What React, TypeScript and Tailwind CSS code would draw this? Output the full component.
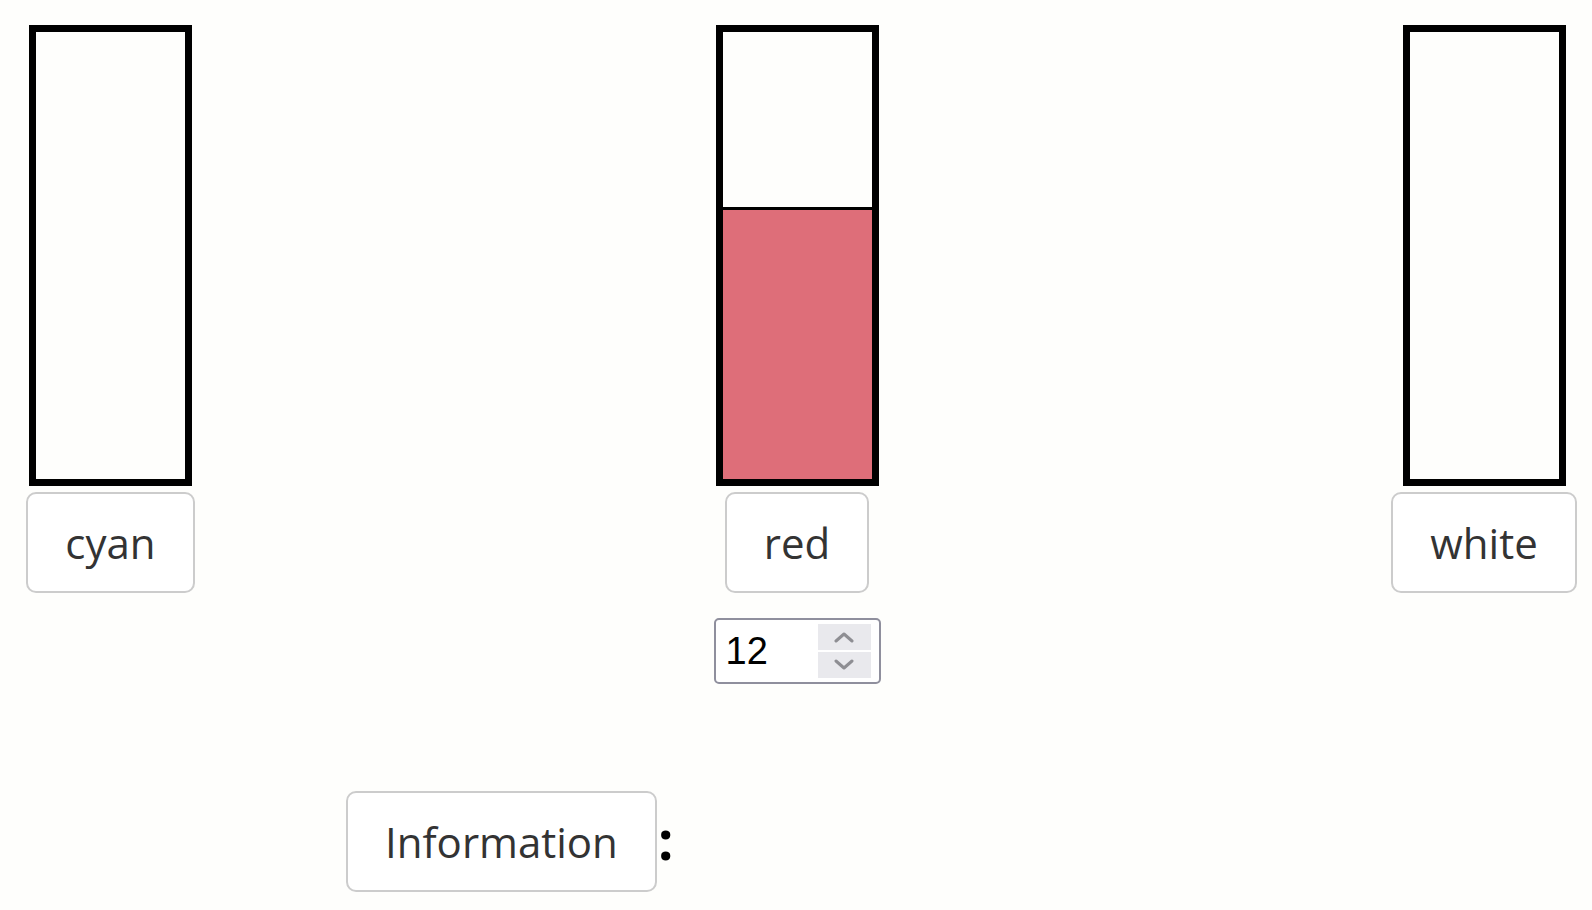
import React from "react"

const font = { fontFamily: '"Open Sans", "Noto Sans", sans-serif' }

function Bar({ fill }: { fill?: string }) {
  return (
    <div className="w-[163px] h-[461px] border-[7px] border-black flex flex-col justify-end">
      {fill && <div className={`h-[272px] border-t-[3px] border-black ${fill}`} />}
    </div>
  )
}

function Label({ children }: { children: React.ReactNode }) {
  return (
    <button
      style={font}
      className="px-[37px] py-[19px] text-[42px] leading-[59px] text-[#333] bg-white border-2 border-[#cccccc] rounded-[10px]"
    >
      {children}
    </button>
  )
}

function NumberBox() {
  return (
    <div className="flex items-center w-[167px] h-[66px] border-2 border-[#8f8f9d] rounded-[5px] bg-white pl-[10px] pr-[8px]">
      <input
        type="text"
        defaultValue="12"
        readOnly
        className="flex-1 min-w-0 bg-transparent outline-none text-[38px] text-black"
        style={{ fontFamily: '"Liberation Sans", Arial, sans-serif' }}
      />
      <div className="flex flex-col w-[53px] h-[54px] gap-[2px]">
        <div className="flex-1 bg-[#e9e9ed] flex items-center justify-center">
          <svg width="22" height="12" viewBox="0 0 22 12" fill="none">
            <path d="M3 10 L11 3 L19 10" stroke="#8e8e93" strokeWidth="3" strokeLinecap="round" strokeLinejoin="round" />
          </svg>
        </div>
        <div className="flex-1 bg-[#e9e9ed] flex items-center justify-center">
          <svg width="22" height="12" viewBox="0 0 22 12" fill="none">
            <path d="M3 2 L11 9 L19 2" stroke="#8e8e93" strokeWidth="3" strokeLinecap="round" strokeLinejoin="round" />
          </svg>
        </div>
      </div>
    </div>
  )
}

export default function App() {
  return (
    <div className="min-h-screen bg-[#fefefc] pt-[25px]">
      <div className="flex items-start">
        <div className="ml-[26px] flex flex-col items-center w-[169px]">
          <Bar />
          <div className="mt-[6px]">
            <Label>cyan</Label>
          </div>
        </div>
        <div className="ml-[518px] flex flex-col items-center w-[168px]">
          <Bar fill="bg-[#de6e79]" />
          <div className="mt-[6px]">
            <Label>red</Label>
          </div>
          <div className="mt-[25px]">
            <NumberBox />
          </div>
        </div>
        <div className="ml-[510px] flex flex-col items-center w-[186px]">
          <Bar />
          <div className="mt-[6px]">
            <Label>white</Label>
          </div>
        </div>
      </div>

      <div className="mt-[107px] ml-[346px] flex items-center">
        <Label>Information</Label>
        <span style={font} className="ml-[1px] -mt-[6px] text-[54px] font-bold leading-none text-black">
          :
        </span>
      </div>
    </div>
  )
}
